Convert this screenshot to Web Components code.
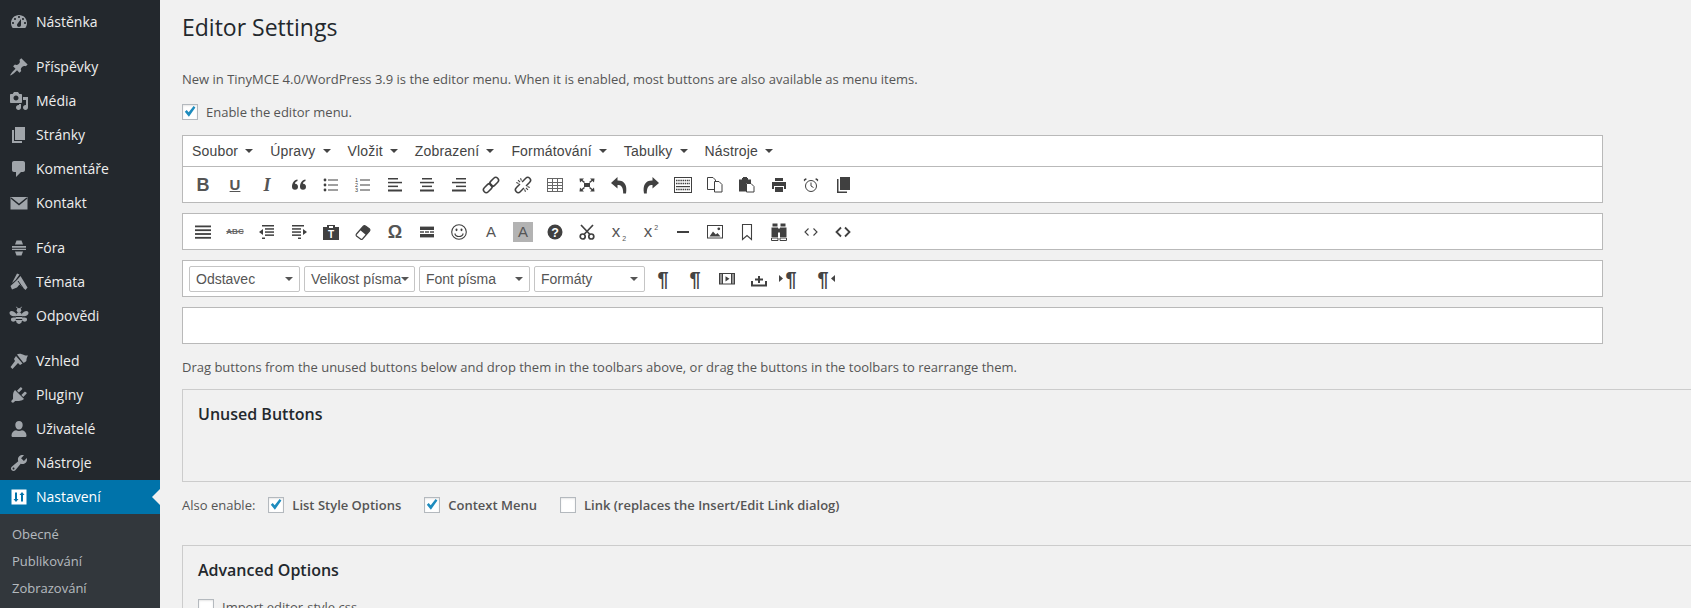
<!DOCTYPE html>
<html lang="cs">
<head>
<meta charset="utf-8">
<title>Editor Settings</title>
<style>
html, body { margin: 0; padding: 0; height: 608px; overflow: hidden; background: #f1f1f1; }
body { display: flex; font-family: "Open Sans", sans-serif; font-size: 13px; color: #444; }
sub, sup { font-size: 7px; line-height: 0; margin-left: 2px; }
</style>
</head>
<body>

<admin-menu>
  <menu-item icon="dashboard">Nástěnka</menu-item>
  <menu-sep></menu-sep>
  <menu-item icon="post">Příspěvky</menu-item>
  <menu-item icon="media">Média</menu-item>
  <menu-item icon="page">Stránky</menu-item>
  <menu-item icon="comments">Komentáře</menu-item>
  <menu-item icon="email">Kontakt</menu-item>
  <menu-sep></menu-sep>
  <menu-item icon="forum">Fóra</menu-item>
  <menu-item icon="topics">Témata</menu-item>
  <menu-item icon="bee">Odpovědi</menu-item>
  <menu-sep></menu-sep>
  <menu-item icon="brush">Vzhled</menu-item>
  <menu-item icon="plugins">Pluginy</menu-item>
  <menu-item icon="users">Uživatelé</menu-item>
  <menu-item icon="tools">Nástroje</menu-item>
  <menu-item icon="settings" current>Nastavení</menu-item>
  <sub-menu>
    <sub-item>Obecné</sub-item>
    <sub-item>Publikování</sub-item>
    <sub-item>Zobrazování</sub-item>
  </sub-menu>
</admin-menu>

<settings-page>
  <page-title>Editor Settings</page-title>
  <page-text style="margin-top:27px">New in TinyMCE 4.0/WordPress 3.9 is the editor menu. When it is enabled, most buttons are also available as menu items.</page-text>
  <check-row style="margin-top:13px">
    <wp-check checked>Enable the editor menu.</wp-check>
  </check-row>

  <editor-bars>
    <mce-bar>
      <mce-menu>
        <span>Soubor</span><span>Úpravy</span><span>Vložit</span><span>Zobrazení</span><span>Formátování</span><span>Tabulky</span><span>Nástroje</span>
      </mce-menu>
      <mce-row>
        <mce-btn kind="bold">B</mce-btn>
        <mce-btn kind="under">U</mce-btn>
        <mce-btn kind="italic">I</mce-btn>
        <mce-btn icon="quote"></mce-btn>
        <mce-btn icon="bullist"></mce-btn>
        <mce-btn icon="numlist"></mce-btn>
        <mce-btn icon="alignleft"></mce-btn>
        <mce-btn icon="aligncenter"></mce-btn>
        <mce-btn icon="alignright"></mce-btn>
        <mce-btn icon="link"></mce-btn>
        <mce-btn icon="unlink"></mce-btn>
        <mce-btn icon="table"></mce-btn>
        <mce-btn icon="fullscreen"></mce-btn>
        <mce-btn icon="undo"></mce-btn>
        <mce-btn icon="redo"></mce-btn>
        <mce-btn icon="keyboard"></mce-btn>
        <mce-btn icon="copy"></mce-btn>
        <mce-btn icon="paste"></mce-btn>
        <mce-btn icon="print"></mce-btn>
        <mce-btn icon="clock"></mce-btn>
        <mce-btn icon="pages"></mce-btn>
      </mce-row>
    </mce-bar>

    <mce-bar>
      <mce-row>
        <mce-btn icon="alignjustify"></mce-btn>
        <mce-btn kind="strike">ABC</mce-btn>
        <mce-btn icon="outdent"></mce-btn>
        <mce-btn icon="indent"></mce-btn>
        <mce-btn icon="pasteplain"></mce-btn>
        <mce-btn icon="eraser"></mce-btn>
        <mce-btn kind="omega">Ω</mce-btn>
        <mce-btn icon="pagebreak"></mce-btn>
        <mce-btn icon="smile"></mce-btn>
        <mce-btn kind="letter">A</mce-btn>
        <mce-btn kind="letter" shaded>A</mce-btn>
        <mce-btn icon="help"></mce-btn>
        <mce-btn icon="cut"></mce-btn>
        <mce-btn kind="script">x<sub>2</sub></mce-btn>
        <mce-btn kind="script">x<sup>2</sup></mce-btn>
        <mce-btn icon="hr"></mce-btn>
        <mce-btn icon="image"></mce-btn>
        <mce-btn icon="bookmark"></mce-btn>
        <mce-btn icon="binoculars"></mce-btn>
        <mce-btn icon="codethin"></mce-btn>
        <mce-btn icon="codebold"></mce-btn>
      </mce-row>
    </mce-bar>

    <mce-bar>
      <mce-row lists>
        <mce-list>Odstavec</mce-list>
        <mce-list>Velikost písma</mce-list>
        <mce-list>Font písma</mce-list>
        <mce-list>Formáty</mce-list>
        <mce-btn kind="pilcrow">¶</mce-btn>
        <mce-btn kind="pilcrow">¶</mce-btn>
        <mce-btn icon="media"></mce-btn>
        <mce-btn icon="tray"></mce-btn>
        <mce-btn kind="pilcrow" dir-mark="left">¶</mce-btn>
        <mce-btn kind="pilcrow" dir-mark="right">¶</mce-btn>
      </mce-row>
    </mce-bar>

    <mce-bar empty></mce-bar>
  </editor-bars>

  <page-text style="margin-top:13px">Drag buttons from the unused buttons below and drop them in the toolbars above, or drag the buttons in the toolbars to rearrange them.</page-text>

  <post-box heading="Unused Buttons" style="margin-top:12px;height:93px"></post-box>

  <check-row style="margin-top:13px" label="Also enable:">
    <wp-check strong checked>List Style Options</wp-check>
    <wp-check strong checked>Context Menu</wp-check>
    <wp-check strong>Link (replaces the Insert/Edit Link dialog)</wp-check>
  </check-row>

  <post-box heading="Advanced Options" style="margin-top:30px">
    <wp-check>Import editor-style.css</wp-check>
  </post-box>
</settings-page>

<script>
// sidebar icons, 20x20 like the dashicons set
const menuIcons = {
  dashboard: '<path fill-rule="evenodd" d="M3.76 16h12.48c1.1-1.37 1.76-3.11 1.76-5 0-4.42-3.58-8-8-8s-8 3.58-8 8c0 1.89.66 3.63 1.76 5zM10 4c.55 0 1 .45 1 1s-.45 1-1 1-1-.45-1-1 .45-1 1-1zM6 6c.55 0 1 .45 1 1s-.45 1-1 1-1-.45-1-1 .45-1 1-1zm8 0c.55 0 1 .45 1 1s-.45 1-1 1-1-.45-1-1 .45-1 1-1zm-5.37 5.55L12 7v6c0 1.1-.9 2-2 2s-2-.9-2-2c0-.57.24-1.08.63-1.45zM4 10c.55 0 1 .45 1 1s-.45 1-1 1-1-.45-1-1 .45-1 1-1zm12 0c.55 0 1 .45 1 1s-.45 1-1 1-1-.45-1-1 .45-1 1-1z"/>',
  post: '<path d="M10.44 3.02l1.82-1.82 6.36 6.35-1.83 1.82c-1.05-.68-2.48-.57-3.41.36l-.75.75c-.92.93-1.04 2.35-.35 3.41l-1.83 1.82-2.41-2.41-2.8 2.79c-.42.42-3.38 2.71-3.8 2.29s1.86-3.39 2.28-3.81l2.79-2.79L4.1 9.36l1.83-1.82c1.05.69 2.48.57 3.41-.36l.75-.75c.93-.92 1.04-2.35.35-3.41z"/>',
  media: '<path fill-rule="evenodd" d="M13 11V4c0-.55-.45-1-1-1h-1.67L9 1H5L3.67 3H2c-.55 0-1 .45-1 1v7c0 .55.45 1 1 1h10c.55 0 1-.45 1-1zM7 4.500c1.380 0 2.500 1.120 2.500 2.500S8.380 9.500 7 9.500 4.500 8.380 4.500 7 5.620 4.500 7 4.500zM14 6h5v10.500c0 1.380-1.120 2.500-2.500 2.500S14 17.880 14 16.500s1.120-2.500 2.500-2.500c.17 0 .34.020.5.050V9h-3V6zm-4 8.050V13h2v3.500c0 1.380-1.120 2.500-2.500 2.500S7 17.880 7 16.500 8.120 14 9.500 14c.17 0 .34.020.5.050z"/>',
  page: '<path d="M6 15V2h10v13H6zm-1 1h8v2H3V5h2v11z"/>',
  comments: '<path d="M5 2h9c1.100 0 2 .9 2 2v7c0 1.100-.9 2-2 2h-2l-5 5v-5H5c-1.100 0-2-.9-2-2V4c0-1.100.9-2 2-2z"/>',
  email: '<path d="M1.500 4h17v12.500h-17z"/><path d="M2 5l8 6.500L18 5" fill="none" stroke="#23282d" stroke-width="1.500"/>',
  forum: '<path d="M7.500 2.500h5l1.500 4H6zM3 8h14v1.800H3zM3 10.800h14v1.200H3zM6 13.500h8l-1.500 4h-5z"/>',
  topics: '<path d="M8 1.500l2.500 1L6.500 8 3 11zM11.500 4l7 11.500-2 2.500-6-5.500-2.500 3L3 17.500 1.500 14 8 8z"/><path d="M9 9l5 7" stroke="#23282d" stroke-width="1" fill="none"/>',
  bee: '<path d="M7.500 8C4 3.500 .5 4.500 .5 7s3.500 4 7 2.800zM12.500 8c3.500-4.500 7-3.500 7-1s-3.500 4-7 2.800zM7 12c-3-1-5.500-.2-5 2s3.500 2.200 5.200.3zM13 12c3-1 5.500-.2 5 2s-3.500 2.200-5.200.3z"/><ellipse cx="10" cy="12" rx="3.500" ry="6"/><circle cx="10" cy="4.200" r="2.300"/><path d="M6.800 10.500h6.400M6.800 13.500h6.400" stroke="#23282d" stroke-width="1.100"/><path d="M8.500 2.500L7.500 .8M11.500 2.500l1-1.700" stroke="#a0a5aa" fill="none"/>',
  brush: '<path d="M8 3.500C10 2 13 3 15 4c1 .5 3 .6 4 .4-1 1.600-1.600 3.500-1.600 5.600-1 1-2 1.600-3 1.800zM7 5l6.500 7.500-2.500 1.500-2-2L3.500 18 1.500 16 6 10 5 8z"/>',
  plugins: '<path d="M13.110 4.360L9.870 7.600 8 5.730l3.240-3.240c.35-.34 1.050-.2 1.560.32.52.51.66 1.210.31 1.550zm-8 1.770l.91-1.120 9.010 9.010-1.190.84c-.71.71-2.630 1.160-3.820 1.160H6.140L4.900 17.260c-.59.59-1.540.59-2.120 0-.59-.58-.59-1.530 0-2.120l1.240-1.240v-3.880c0-1.130.4-3.190 1.090-3.890zm7.260 3.970l3.240-3.240c.34-.35 1.040-.21 1.550.31.52.51.66 1.210.31 1.550l-3.240 3.250z"/>',
  users: '<path d="M10 10.500c-2.200 0-3.700-2-3.700-4.500S7.800 2 10 2s3.700 1.500 3.700 4-1.500 4.500-3.700 4.500zM2.500 16.500c0-3 2-5 4.500-5.300 1.800 1 4.200 1 6 0 2.500.3 4.500 2.300 4.500 5.300 0 1-.7 1.500-1.500 1.500H4c-.8 0-1.500-.5-1.500-1.500z"/>',
  tools: '<path fill-rule="evenodd" d="M16.680 9.770c-1.340 1.340-3.300 1.670-4.950.99l-5.410 6.520c-.99.99-2.590.99-3.580 0s-.99-2.590 0-3.570l6.520-5.420c-.68-1.650-.35-3.610.99-4.950 1.280-1.280 3.120-1.620 4.720-1.060l-2.890 2.890 2.820 2.820 2.890-2.890c.56 1.600.22 3.440-1.060 4.720zM3.810 16.210c.4.390 1.030.39 1.420 0 .4-.4.400-1.030 0-1.430-.39-.39-1.020-.39-1.420 0-.39.4-.39 1.030 0 1.430z"/>',
  settings: '<path fill-rule="evenodd" d="M2.500 2.500h15v15h-15zM6 5.500v6.500H4.500L7 15l2.500-3H8V5.500zM12 14.500V8h-1.500L13 5l2.500 3H14v6.500z"/>'
}

// editor toolbar icons, 16x16
const line = (x, y, w, h = 2) => `<rect x="${x}" y="${y}" width="${w}" height="${h}"/>`
const mceIcons = {
  quote: '<path d="M7 9.700a3 3 0 1 1-6 0C1 6.200 3 3 6.500 2.500v1.600C5 4.600 4.100 5.500 3.900 6.800 5.700 6.500 7 8 7 9.700zM15 9.700a3 3 0 1 1-6 0C9 6.200 11 3 14.500 2.500v1.600C13 4.600 12.100 5.500 11.900 6.800 13.700 6.500 15 8 15 9.700z"/>',
  bullist: '<circle cx="2" cy="3" r="1.400"/><circle cx="2" cy="8" r="1.400"/><circle cx="2" cy="13" r="1.400"/>' + line(5, 2.500, 10, 1) + line(5, 7.500, 10, 1) + line(5, 12.500, 10, 1),
  numlist: '<text x="0" y="5" font-size="5.500" font-family="Liberation Sans">1</text><text x="0" y="10" font-size="5.500" font-family="Liberation Sans">2</text><text x="0" y="15" font-size="5.500" font-family="Liberation Sans">3</text>' + line(5, 2.500, 10, 1) + line(5, 7.500, 10, 1) + line(5, 12.500, 10, 1),
  alignleft: line(1, 1, 10, 1.500) + line(1, 4.800, 14, 1.500) + line(1, 8.600, 10, 1.500) + line(1, 12.500, 14, 2),
  aligncenter: line(3, 1, 10, 1.500) + line(1, 4.800, 14, 1.500) + line(3, 8.600, 10, 1.500) + line(1, 12.500, 14, 2),
  alignright: line(5, 1, 10, 1.500) + line(1, 4.800, 14, 1.500) + line(5, 8.600, 10, 1.500) + line(1, 12.500, 14, 2),
  alignjustify: line(0, 1.500, 16, 1.800) + line(0, 5.300, 16, 1.800) + line(0, 9.100, 16, 1.800) + line(0, 12.900, 16, 1.800),
  link: '<g fill="none" stroke="currentColor" stroke-width="1.500" transform="rotate(-45 8 8)"><rect x="-1.500" y="5.200" width="10" height="5.600" rx="2.800"/><rect x="7.500" y="5.200" width="10" height="5.600" rx="2.800"/></g>',
  unlink: '<g fill="none" stroke="currentColor" stroke-width="1.500" transform="rotate(-45 8 8)"><path d="M6.500 5.200H1.300a2.800 2.800 0 0 0 0 5.600h5.200"/><path d="M9.500 5.200h5.200a2.800 2.800 0 0 1 0 5.600H9.500"/><path stroke-width="1.100" d="M8 3.800V1M8 12.200V15M6 3.800L5 1.500M10 3.800l1-2.300M6 12.200l-1 2.300M10 12.200l1 2.300"/></g>',
  table: '<g fill="none" stroke="#666"><rect x=".5" y="1.500" width="15" height="13"/><path d="M0 5.500h16M0 8.500h16M0 11.500h16M5.500 1.500v13M10.500 1.500v13"/></g>',
  fullscreen: '<rect x="5" y="6" width="6" height="4"/><path d="M.5 1.500h4.500L3.500 3 6 5 5 6 2.500 4 1 5.500zM15.500 1.500H11l1.500 1.500L10 5l1 1 2.500-2L15 5.500zM.5 14.500H5l-1.500-1.500L6 11l-1-1-2.500 2L1 10.500zM15.500 14.500H11l1.500-1.500L10 11l1-1 2.500 2 1.500-1.500z"/>',
  undo: '<path d="M6.500 0L0 6l6.500 5.500V8c3.500 0 5.700 1.500 5.700 8.500H15C16.500 8 13.500 3.300 6.500 3.500z"/>',
  redo: '<path d="M9.500 0L16 6l-6.500 5.500V8C6 8 3.800 9.500 3.800 16.500H1C-.5 8 2.500 3.300 9.500 3.500z"/>',
  keyboard: '<rect x="-.5" y=".5" width="17" height="15" fill="none" stroke="currentColor"/><path stroke="currentColor" stroke-width="1.400" stroke-dasharray="1.500 .7" d="M1 3.500h14M1 6.500h14M1 12.500h14"/><rect x="1" y="9" width="14" height="1.200"/>',
  copy: '<g fill="#fff" stroke="currentColor"><path d="M.5 .5h5.500l2.500 2.500v9.500H.5z"/><path d="M7.500 4.500h4.500l3 3v7.500H7.500z"/></g>',
  paste: '<path d="M0 2.500h3V1h6v1.500h3V6H7v8.500H0z"/><rect x="4" y="0" width="4" height="2"/><path fill="#fff" stroke="currentColor" d="M7.500 6.500h4.500l3 3v5.500H7.500z"/>',
  print: '<path d="M4 1h8v3H4zM1 5h14v7h-2V9H3v3H1zM4 10h8v5H4z"/>',
  clock: '<g fill="none" stroke="currentColor"><circle cx="8" cy="9" r="5.500"/><path d="M8 5.500V9l2.500 1.500"/></g><path d="M1 4.500L4 2 2.500 1.200.8 2.500zM15 4.500L12 2l1.500-.8 1.700 1.300z"/>',
  pages: '<path d="M5 13V0h10v13H5zM3.500 2v12.500H12v1.500H2V2z"/>',
  outdent: line(3, 1, 12, 1.500) + line(6, 4.200, 9, 1.500) + line(6, 7.300, 9, 1.500) + line(6, 10.400, 9, 1.500) + line(3, 13.500, 3, 1.500) + '<path d="M0 8l4-3v6z"/>',
  indent: line(1, 1, 12, 1.500) + line(1, 4.200, 9, 1.500) + line(1, 7.300, 9, 1.500) + line(1, 10.400, 9, 1.500) + line(7, 13.500, 3, 1.500) + '<path d="M16 8l-4-3v6z"/>',
  pasteplain: '<path d="M0 3h4V1h8v2h4v13H0z"/><rect x="6" y="2" width="4" height="2" fill="#fff"/><text x="8" y="14" text-anchor="middle" font-size="10" font-weight="700" font-family="Liberation Sans" fill="#fff">T</text>',
  eraser: '<path fill="#fff" stroke="currentColor" stroke-width="1.200" d="M1.500 10l7-8a1.500 1.500 0 0 1 2 0l4 3a1.500 1.500 0 0 1 0 2l-7 8a1.500 1.500 0 0 1-2 0l-4-3a1.500 1.500 0 0 1 0-2z"/><path d="M8.500 2a1.500 1.500 0 0 1 2 0l4 3a1.500 1.500 0 0 1 0 2l-3.500 4-6-5z"/>',
  pagebreak: line(1, 2.600, 14, 3.400) + line(1, 7.300, 4, 1.400) + line(6, 7.300, 4, 1.400) + line(11, 7.300, 4, 1.400) + line(1, 10, 14, 3.400),
  smile: '<g fill="none" stroke="currentColor" stroke-width="1.100"><circle cx="8" cy="8" r="7.300"/><path d="M3.800 9.500c1 4 7.400 4 8.400 0"/></g><ellipse cx="5.500" cy="5.800" rx="1" ry="1.400"/><ellipse cx="10.500" cy="5.800" rx="1" ry="1.400"/>',
  help: '<circle cx="8" cy="8" r="7.500"/><text x="8" y="12.500" text-anchor="middle" font-size="12.500" font-weight="700" font-family="Liberation Sans" fill="#fff">?</text>',
  cut: '<g fill="none" stroke="currentColor" stroke-width="1.700"><circle cx="3.700" cy="12.500" r="2.500"/><circle cx="12.300" cy="12.500" r="2.500"/><path d="M2 1l9 9.500M14 1L5 10.500"/></g>',
  hr: line(2, 7, 12, 2),
  image: '<rect x=".5" y="1.500" width="15" height="12.500" fill="none" stroke="currentColor"/><path d="M2.500 12.500l3.500-5 2.800 3 1.700-1.500 3 3.500z"/><circle cx="11.800" cy="4.800" r="1.400"/>',
  bookmark: '<path fill="none" stroke="currentColor" stroke-width="1.100" d="M3.500 .5h9v15L8 11.500l-4.500 4z"/>',
  binoculars: '<path d="M1.500 -.5h5v3h-5zM9.500 -.5h5v3h-5zM.5 3.500h6.500v9.500H.5zM9 3.500h6.500v9.500H9zM7 4.500h2v4H7z"/><path d="M.5 14h6.500v2.500H.5zM9 14h6.500v2.500H9z" fill="none" stroke="currentColor"/>',
  codethin: '<path fill="none" stroke="currentColor" stroke-width="1.100" d="M5.500 4.500L2 8l3.500 3.500M10.500 4.500L14 8l-3.500 3.500"/>',
  codebold: '<path fill="none" stroke="currentColor" stroke-width="1.800" d="M6 3.500L1.500 8 6 12.500M10 3.500L14.500 8 10 12.500"/>',
  media: '<rect x=".5" y="2.500" width="15" height="10.500" fill="none" stroke="currentColor"/><path d="M1 3h2v10H1zM13 3h2v10h-2z" opacity=".55"/><path d="M6.500 5.200l4 2.600-4 2.600z"/><path stroke="currentColor" d="M3.500 3v10M12.500 3v10" fill="none"/>',
  tray: '<path d="M0 10h2v3.500h12V10h2v5.500H0zM7 5h2v2.500h3v2H9V12H7V9.500H4v-2h3z"/>'
}

const caret = '<svg width="8" height="4" viewBox="0 0 8 4" style="display:block;flex:none"><path d="M0 0h8L4 4z" fill="currentColor"/></svg>'
const checkMark = '<svg width="14" height="14" viewBox="0 0 14 14"><path d="M1.800 6.800l1.900-1.700 2 2.200L10.600 1l1.800 1.400-6.500 9.300z" fill="#1e8cbe"/></svg>'

class AdminMenu extends HTMLElement {
  constructor () {
    super()
    this.attachShadow({ mode: 'open' }).innerHTML = `
      <style>
        :host { display: flex; flex-direction: column; flex: none; width: 160px; height: 608px; padding-top: 5px; box-sizing: border-box; background: #23282d; overflow: hidden; }
      </style>
      <slot></slot>`
  }
}

class MenuSep extends HTMLElement {
  constructor () {
    super()
    this.attachShadow({ mode: 'open' }).innerHTML = '<style>:host { display: block; height: 11px; }</style>'
  }
}

class MenuItem extends HTMLElement {
  constructor () {
    super()
    const icon = menuIcons[this.getAttribute('icon')] || ''
    this.attachShadow({ mode: 'open' }).innerHTML = `
      <style>
        :host { display: flex; align-items: center; flex: none; position: relative; height: 34px; color: #eee; font: 14px/18px "Open Sans", sans-serif; }
        svg { flex: none; width: 20px; height: 20px; margin: 0 7px 0 9px; fill: #a0a5aa; }
        :host([current]) { background: #0073aa; color: #fff; }
        :host([current]) svg { fill: #fff; }
        :host([current])::after { content: ""; position: absolute; right: 0; top: 50%; margin-top: -8px; border: 8px solid transparent; border-right-color: #f1f1f1; border-left-width: 0; }
      </style>
      <svg viewBox="0 0 20 20">${icon}</svg><slot></slot>`
  }
}

class SubMenu extends HTMLElement {
  constructor () {
    super()
    this.attachShadow({ mode: 'open' }).innerHTML = `
      <style>:host { display: block; flex: 1; padding-top: 7px; background: #32373c; }</style>
      <slot></slot>`
  }
}

class SubItem extends HTMLElement {
  constructor () {
    super()
    this.attachShadow({ mode: 'open' }).innerHTML = `
      <style>:host { display: block; height: 27px; padding-left: 12px; color: rgba(240,245,250,.7); font: 13px/27px "Open Sans", sans-serif; }</style>
      <slot></slot>`
  }
}

class SettingsPage extends HTMLElement {
  constructor () {
    super()
    this.attachShadow({ mode: 'open' }).innerHTML = `
      <style>:host { display: block; flex: 1; min-width: 0; height: 608px; padding-left: 22px; overflow: hidden; }</style>
      <slot></slot>`
  }
}

class PageTitle extends HTMLElement {
  constructor () {
    super()
    this.attachShadow({ mode: 'open' }).innerHTML = `
      <style>:host { display: block; padding-top: 12px; color: #23282d; font: 400 23px/30px "Open Sans", sans-serif; }</style>
      <slot></slot>`
  }
}

class PageText extends HTMLElement {
  constructor () {
    super()
    this.attachShadow({ mode: 'open' }).innerHTML = `
      <style>:host { display: block; color: #555; font: 13px/20px "Open Sans", sans-serif; }</style>
      <slot></slot>`
  }
}

class CheckRow extends HTMLElement {
  constructor () {
    super()
    const label = this.getAttribute('label')
    this.attachShadow({ mode: 'open' }).innerHTML = `
      <style>
        :host { display: flex; align-items: center; gap: 23px; height: 20px; color: #555; font: 13px/20px "Open Sans", sans-serif; }
        span { margin-right: -10px; }
      </style>
      ${label ? `<span>${label}</span>` : ''}<slot></slot>`
  }
}

class WpCheck extends HTMLElement {
  constructor () {
    super()
    const mark = this.hasAttribute('checked') ? checkMark : ''
    this.attachShadow({ mode: 'open' }).innerHTML = `
      <style>
        :host { display: inline-flex; align-items: center; gap: 8px; color: #555; font: 13px/20px "Open Sans", sans-serif; white-space: nowrap; }
        :host([strong]) { font-weight: 600; }
        i { display: flex; align-items: center; justify-content: center; flex: none; box-sizing: border-box; width: 16px; height: 16px; background: #fff; border: 1px solid #b4b9be; box-shadow: inset 0 1px 2px rgba(0,0,0,.1); }
      </style>
      <i>${mark}</i><slot></slot>`
  }
}

class EditorBars extends HTMLElement {
  constructor () {
    super()
    this.attachShadow({ mode: 'open' }).innerHTML = `
      <style>:host { display: flex; flex-direction: column; gap: 10px; width: 1421px; margin-top: 13px; }</style>
      <slot></slot>`
  }
}

class MceBar extends HTMLElement {
  constructor () {
    super()
    this.attachShadow({ mode: 'open' }).innerHTML = `
      <style>
        :host { display: block; background: #fff; border: 1px solid #b9b9b9; }
        :host([empty]) { height: 35px; }
      </style>
      <slot></slot>`
  }
}

class MceMenu extends HTMLElement {
  constructor () {
    super()
    this.attachShadow({ mode: 'open' }).innerHTML = `
      <style>
        :host { display: flex; align-items: center; height: 30px; padding-left: 9px; border-bottom: 1px solid #b9b9b9; color: #444; letter-spacing: .17px; font: 14px/20px "Liberation Sans", Arial, sans-serif; }
      </style>
      <slot></slot>`
    // every top level entry gets a little caret next to it
    this.querySelectorAll('span').forEach((entry) => {
      entry.style.cssText = 'display:flex;align-items:center;gap:7px;margin-right:17px'
      entry.insertAdjacentHTML('beforeend', caret)
    })
  }
}

class MceRow extends HTMLElement {
  constructor () {
    super()
    this.attachShadow({ mode: 'open' }).innerHTML = `
      <style>
        :host { display: flex; align-items: center; height: 35px; padding-left: 4px; }
        :host([lists]) { padding-left: 6px; }
      </style>
      <slot></slot>`
  }
}

class MceBtn extends HTMLElement {
  constructor () {
    super()
    const name = this.getAttribute('icon')
    const icon = name ? `<svg viewBox="0 0 16 16" width="16" height="16" fill="currentColor">${mceIcons[name]}</svg>` : ''
    const mark = this.getAttribute('dir-mark')
    const arrow = mark ? `<svg class="${mark}" width="4" height="7" viewBox="0 0 4 7"><path d="${mark === 'left' ? 'M0 0l4 3.500L0 7z' : 'M4 0L0 3.500 4 7z'}" fill="currentColor"/></svg>` : ''
    this.attachShadow({ mode: 'open' }).innerHTML = `
      <style>
        :host { display: flex; align-items: center; justify-content: center; flex: none; width: 32px; height: 35px; color: #404040; font: 14px/20px "Liberation Sans", Arial, sans-serif; }
        .shade { display: block; line-height: 20px; text-align: center; }
        :host([shaded]) .shade { width: 20px; background: #b3b3b3; }
        svg { display: block; overflow: visible; }
        :host([kind=bold]) { font: 700 18px/20px "Liberation Sans", Arial, sans-serif; color: #555; }
        :host([kind=under]) { font: 700 15px/20px "Liberation Sans", Arial, sans-serif; color: #555; text-decoration: underline; }
        :host([kind=italic]) { font: italic 700 18px/20px "Liberation Serif", serif; color: #555; }
        :host([kind=strike]) { font: 700 8px/20px "Liberation Sans", Arial, sans-serif; text-decoration: line-through; color: #666; }
        :host([kind=omega]) { font: 700 18px/20px "Liberation Sans", Arial, sans-serif; color: #555; }
        :host([kind=letter]) { font: 15px/20px "Liberation Sans", Arial, sans-serif; color: #555; }
        :host([kind=script]) { font: 17px/20px "Liberation Sans", Arial, sans-serif; color: #555; }
        :host([kind=pilcrow]) { font: 700 20px/20px "Liberation Sans", Arial, sans-serif; color: #444; }
        svg.left { margin: 0 2px 0 -6px; }
        svg.right { margin: 0 -6px 0 2px; }
      </style>
      ${mark === 'left' ? arrow : ''}<span class="shade">${icon}<slot></slot></span>${mark === 'right' ? arrow : ''}`
  }
}

class MceList extends HTMLElement {
  constructor () {
    super()
    this.attachShadow({ mode: 'open' }).innerHTML = `
      <style>
        :host { display: flex; align-items: center; justify-content: space-between; flex: none; box-sizing: border-box; width: 111px; height: 26px; margin-right: 4px; padding: 0 6px; background: #fff; border: 1px solid #c5c5c5; border-radius: 2px; color: #555; font: 14px/20px "Liberation Sans", Arial, sans-serif; white-space: nowrap; }
        :host(:last-of-type) { margin-right: 2px; }
      </style>
      <slot></slot>${caret}`
  }
}

class PostBox extends HTMLElement {
  constructor () {
    super()
    const heading = this.getAttribute('heading')
    this.attachShadow({ mode: 'open' }).innerHTML = `
      <style>
        :host { display: block; box-sizing: border-box; width: 1540px; padding: 0 15px; border: 1px solid #ccc; }
        h3 { margin: 11px 0 14px; color: #23282d; font: 600 16px/26px "Open Sans", sans-serif; }
      </style>
      <h3>${heading}</h3><slot></slot>`
  }
}

customElements.define('admin-menu', AdminMenu)
customElements.define('menu-sep', MenuSep)
customElements.define('menu-item', MenuItem)
customElements.define('sub-menu', SubMenu)
customElements.define('sub-item', SubItem)
customElements.define('settings-page', SettingsPage)
customElements.define('page-title', PageTitle)
customElements.define('page-text', PageText)
customElements.define('check-row', CheckRow)
customElements.define('wp-check', WpCheck)
customElements.define('editor-bars', EditorBars)
customElements.define('mce-bar', MceBar)
customElements.define('mce-menu', MceMenu)
customElements.define('mce-row', MceRow)
customElements.define('mce-btn', MceBtn)
customElements.define('mce-list', MceList)
customElements.define('post-box', PostBox)
</script>
</body>
</html>
